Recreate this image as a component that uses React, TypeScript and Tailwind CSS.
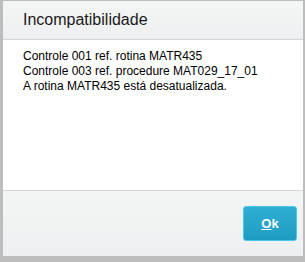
export default function App() {
  return (
    <div className="w-[305px] h-[262px] bg-[#bdbdbd] pl-[3px] pr-[2px] pt-[1px] pb-[6px] font-['Liberation_Sans',Arial,sans-serif]">
      <div className="flex h-full flex-col bg-white">
        {/* Header */}
        <div className="flex h-[39px] items-center border-b border-[#d4d5d6] bg-gradient-to-b from-[#f4f5f5] to-[#eeeff0] pl-[20px]">
          <h1 className="text-[16px] text-[#1a1a1a] leading-none">Incompatibilidade</h1>
        </div>

        {/* Body */}
        <div className="h-[150px] pl-[20px] pt-[9px] text-[12px] leading-[15px] text-black">
          <p>Controle 001 ref. rotina MATR435</p>
          <p>Controle 003 ref. procedure MAT029_17_01</p>
          <p>A rotina MATR435 está desatualizada.</p>
        </div>

        {/* Footer */}
        <div className="flex flex-1 items-center justify-end border-t border-[#d4d5d6] bg-gradient-to-b from-[#f3f4f4] to-[#eeeff0] pr-[6px]">
          <button className="flex h-[35px] w-[54px] items-center justify-center rounded-[3px] border border-[#4cc6e8] bg-gradient-to-b from-[#2eaed3] to-[#1f9cc2] text-[13px] font-bold text-white">
            <span><span className="underline">O</span>k</span>
          </button>
        </div>
      </div>
    </div>
  );
}
